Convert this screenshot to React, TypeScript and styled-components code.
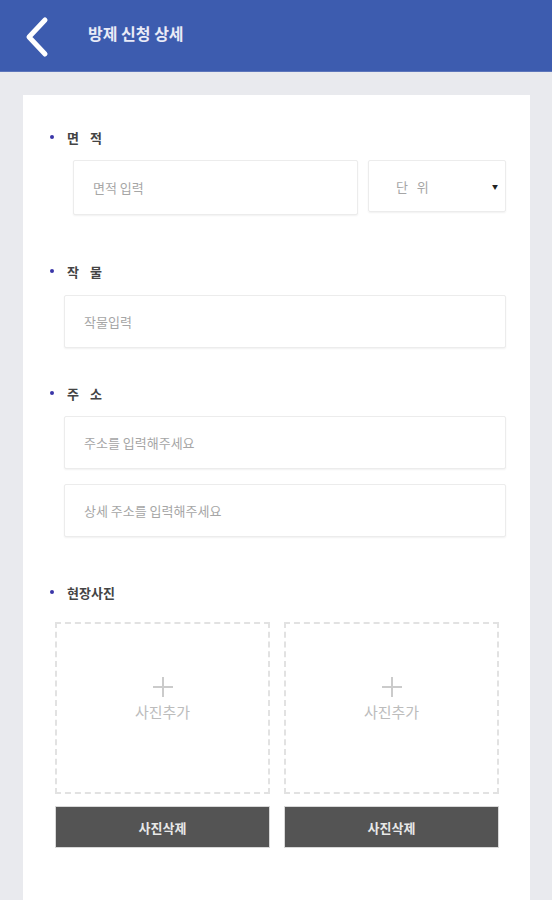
import styled, { createGlobalStyle } from "styled-components";

const GlobalStyle = createGlobalStyle`
  * {
    box-sizing: border-box;
  }
  body {
    margin: 0;
    background: #e9eaee;
    font-family: "Noto Sans CJK KR", "Noto Sans", sans-serif;
  }
`;

const BackIcon = () => (
  <svg width="28" height="42" viewBox="0 0 28 42">
    <path
      d="M22 4 L6 21 L22 38"
      fill="none"
      stroke="#ffffff"
      strokeWidth="5"
      strokeLinecap="round"
      strokeLinejoin="round"
    />
  </svg>
);

const PlusIcon = () => (
  <svg width="20" height="20" viewBox="0 0 20 20">
    <path d="M10 0 V20 M0 10 H20" stroke="#cbcbcb" strokeWidth="2" />
  </svg>
);

const PhotoSlot = () => (
  <PhotoColumn>
    <PhotoBox>
      <PlusIcon />
      <PhotoText>사진추가</PhotoText>
    </PhotoBox>
    <DeleteButton>사진삭제</DeleteButton>
  </PhotoColumn>
);

const App = () => {
  return (
    <>
      <GlobalStyle />
      <Page>
        <Header>
          <BackButton>
            <BackIcon />
          </BackButton>
          <Title>방제 신청 상세</Title>
        </Header>
        <Card>
          <Section $top={0}>
            <Label>면 적</Label>
            <Row $indent={50}>
              <Input $flex $height={55} placeholder="면적 입력" />
              <UnitSelect>
                <span>단 위</span>
                <Caret>▼</Caret>
              </UnitSelect>
            </Row>
          </Section>
          <Section $top={48}>
            <Label>작 물</Label>
            <Row $indent={41} $gapTop={16}>
              <Input $flex placeholder="작물입력" />
            </Row>
          </Section>
          <Section $top={37}>
            <Label>주 소</Label>
            <Stack>
              <Input placeholder="주소를 입력해주세요" />
              <Input placeholder="상세 주소를 입력해주세요" />
            </Stack>
          </Section>
          <Section $top={47}>
            <Label $spacing={0}>현장사진</Label>
            <PhotoGrid>
              <PhotoSlot />
              <PhotoSlot />
            </PhotoGrid>
          </Section>
        </Card>
      </Page>
    </>
  );
};

const Page = styled.div`
  min-height: 900px;
  background: #e9eaee;
`;

const Header = styled.header`
  display: flex;
  align-items: center;
  height: 72px;
  padding-left: 23px;
  background: #3d5caf;
  border-bottom: 1px solid #5d76bb;
`;

const BackButton = styled.div`
  display: flex;
  align-items: center;
  width: 28px;
  height: 42px;
  margin-top: 2px;
`;

const Title = styled.h1`
  margin: 0 0 6px 37px;
  font-size: 16px;
  font-weight: 700;
  color: #e9ebf7;
`;

const Card = styled.main`
  margin: 23px 22px 0 23px;
  min-height: 805px;
  background: #ffffff;
  padding: 34px 24px 40px 27px;
`;

const Section = styled.section<{ $top: number }>`
  margin-top: ${(p) => p.$top}px;
`;

const Label = styled.div<{ $spacing?: number }>`
  display: flex;
  align-items: center;
  height: 16px;
  font-size: 13px;
  font-weight: 700;
  color: #444;
  letter-spacing: ${(p) => p.$spacing ?? 4}px;

  &::before {
    content: "";
    width: 4px;
    height: 4px;
    margin-right: 13px;
    border-radius: 50%;
    background: #3a36a8;
  }
`;

const Row = styled.div<{ $indent: number; $gapTop?: number }>`
  display: flex;
  align-items: flex-start;
  gap: 10px;
  margin-top: ${(p) => p.$gapTop ?? 15}px;
  padding-left: ${(p) => p.$indent - 27}px;
`;

const Stack = styled.div`
  display: flex;
  flex-direction: column;
  gap: 15px;
  margin-top: 15px;
  padding-left: 14px;
`;

const Input = styled.input<{ $flex?: boolean; $height?: number }>`
  ${(p) => (p.$flex ? "flex: 1;" : "")}
  height: ${(p) => p.$height ?? 53}px;
  padding: 0 19px;
  border: 1px solid #ececec;
  border-radius: 2px;
  box-shadow: 0 1px 2px rgba(0, 0, 0, 0.06);
  background: #fff;
  font-family: inherit;
  font-size: 13px;
  color: #333;
  outline: none;

  &::placeholder {
    color: #a6a6a6;
  }
`;

const UnitSelect = styled.div`
  display: flex;
  align-items: center;
  justify-content: space-between;
  width: 138px;
  height: 52px;
  padding: 0 7px 0 27px;
  border: 1px solid #ececec;
  border-radius: 2px;
  box-shadow: 0 1px 2px rgba(0, 0, 0, 0.06);
  font-size: 13px;
  color: #a6a6a6;
  letter-spacing: 3px;
`;

const Caret = styled.span`
  font-size: 6px;
  color: #222;
  letter-spacing: 0;
`;

const PhotoGrid = styled.div`
  display: grid;
  grid-template-columns: 215px 215px;
  gap: 14px;
  margin-top: 22px;
  padding-left: 5px;
`;

const PhotoColumn = styled.div`
  display: flex;
  flex-direction: column;
  gap: 12px;
`;

const PhotoBox = styled.div`
  display: flex;
  flex-direction: column;
  align-items: center;
  justify-content: center;
  height: 172px;
  border: 2px dashed #e2e2e2;
  padding-bottom: 18px;
`;

const PhotoText = styled.div`
  margin-top: 5px;
  font-size: 15px;
  line-height: 20px;
  color: #bcbcbc;
`;

const DeleteButton = styled.button`
  height: 42px;
  border: 1px solid #d8d8d8;
  background: #545454;
  font-family: inherit;
  font-size: 13px;
  font-weight: 700;
  color: #e8e8e8;
`;

export default App;
